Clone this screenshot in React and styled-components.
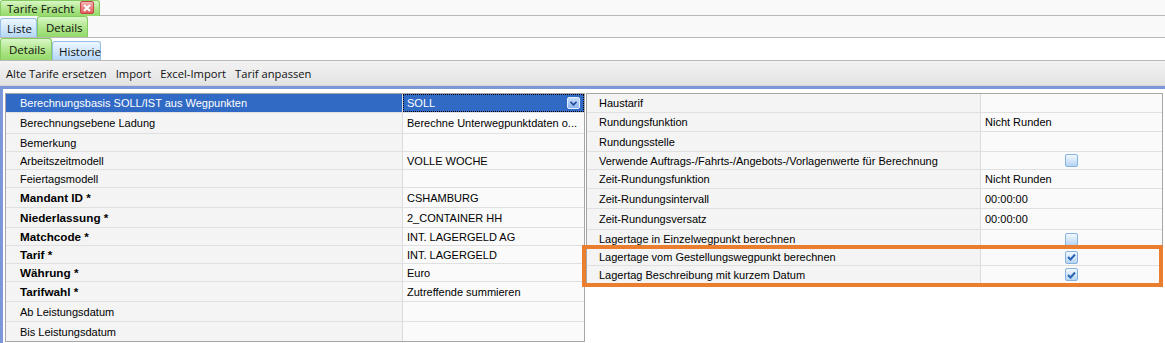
import styled, { createGlobalStyle, css } from 'styled-components';

const Global = createGlobalStyle`
  html, body { margin: 0; padding: 0; background: #fff; }
  body {
    font-family: "Liberation Sans", Arial, sans-serif;
    font-size: 11px;
    color: #000;
    width: 1165px;
    height: 343px;
    overflow: hidden;
  }
`;

const leftRows = [
  { label: 'Berechnungsbasis SOLL/IST aus Wegpunkten', value: 'SOLL', h: 19, selected: true },
  { label: 'Berechnungsebene Ladung', value: 'Berechne Unterwegpunktdaten o...', h: 21 },
  { label: 'Bemerkung', value: '', h: 18 },
  { label: 'Arbeitszeitmodell', value: 'VOLLE WOCHE', h: 18 },
  { label: 'Feiertagsmodell', value: '', h: 18 },
  { label: 'Mandant ID *', value: 'CSHAMBURG', h: 20, bold: true },
  { label: 'Niederlassung *', value: '2_CONTAINER HH', h: 20, bold: true },
  { label: 'Matchcode *', value: 'INT. LAGERGELD AG', h: 18, bold: true },
  { label: 'Tarif *', value: 'INT. LAGERGELD', h: 18, bold: true },
  { label: 'Währung *', value: 'Euro', h: 18, bold: true },
  { label: 'Tarifwahl *', value: 'Zutreffende summieren', h: 20, bold: true },
  { label: 'Ab Leistungsdatum', value: '', h: 20 },
  { label: 'Bis Leistungsdatum', value: '', h: 19 },
];

const rightRows = [
  { label: 'Haustarif', value: '', h: 19 },
  { label: 'Rundungsfunktion', value: 'Nicht Runden', h: 19 },
  { label: 'Rundungsstelle', value: '', h: 20 },
  { label: 'Verwende Auftrags-/Fahrts-/Angebots-/Vorlagenwerte für Berechnung', check: false, h: 18 },
  { label: 'Zeit-Rundungsfunktion', value: 'Nicht Runden', h: 19 },
  { label: 'Zeit-Rundungsintervall', value: '00:00:00', h: 20 },
  { label: 'Zeit-Rundungsversatz', value: '00:00:00', h: 21 },
  { label: 'Lagertage in Einzelwegpunkt berechnen', check: false, h: 19 },
  { label: 'Lagertage vom Gestellungswegpunkt berechnen', check: true, h: 17 },
  { label: 'Lagertag Beschreibung mit kurzem Datum', check: true, h: 18 },
];

const uiFont = css`
  font-family: "Open Sans", "Noto Sans", sans-serif;
  font-size: 11.5px;
`;

const TabStrip = styled.div`
  display: flex;
  align-items: flex-end;
  height: ${(p) => p.$h}px;
  box-sizing: border-box;
  background: ${(p) => (p.$white ? '#fff' : '#f9f9f9')};
  border-bottom: 1px solid #b9b9b9;
  ${uiFont};
`;

const green = css`
  background: linear-gradient(#d9f7c6, #aee58a 55%, #94d96a);
  border: 1px solid #86cb5f;
`;

const blue = css`
  background: linear-gradient(#eef7ff, #cfe6fb 55%, #b3d6f5);
  border: 1px solid #95bfe6;
`;

const Tab = styled.div`
  display: flex;
  align-items: center;
  box-sizing: border-box;
  width: ${(p) => p.$w}px;
  height: ${(p) => p.$h}px;
  padding-left: ${(p) => p.$pad ?? 6}px;
  border-bottom: none !important;
  border-radius: 3px 3px 0 0;
  color: #111;
  ${(p) => (p.$green ? green : blue)};
`;

const Close = styled.span`
  margin-left: auto;
  margin-right: 5px;
  width: 14px;
  height: 13px;
  box-sizing: border-box;
  border: 1px solid #c04848;
  border-radius: 2px;
  background: linear-gradient(#f6b4b4, #e25b5b);
  display: flex;
  align-items: center;
  justify-content: center;
  align-self: flex-start;
`;

const Toolbar = styled.div`
  display: flex;
  align-items: center;
  gap: 9px;
  height: 25px;
  padding-left: 6px;
  box-sizing: border-box;
  background: linear-gradient(#f3f3f3, #e3e3e3);
  border-bottom: 1px solid #d6d6d6;
  ${uiFont};
  font-size: 11.2px;
  color: #111;
`;

const Workspace = styled.div`
  position: relative;
  display: flex;
  align-items: flex-start;
  height: 257px;
  box-sizing: border-box;
  border-top: 3px solid #7c97da;
  border-left: 3px solid #7c97da;
  padding: 4px 0 0 2px;
`;

const Grid = styled.div`
  display: grid;
  grid-template-columns: ${(p) => p.$cols};
  border: 1px solid #a6a6a6;
  border-bottom: ${(p) => (p.$open ? 'none' : '1px solid #a6a6a6')};
  margin-left: ${(p) => p.$ml || 0}px;
`;

const Cell = styled.div`
  display: flex;
  align-items: center;
  box-sizing: border-box;
  height: ${(p) => p.$h}px;
  padding-left: ${(p) => p.$pl}px;
  border-bottom: ${(p) => (p.$last ? 'none' : '1px solid #e0e0e0')};
  white-space: nowrap;
  overflow: hidden;
  background: ${(p) => (p.$value ? '#fafafa' : '#f4f4f4')};
  ${(p) => !p.$value && 'border-right: 1px solid #dcdcdc;'}
  ${(p) => p.$bold && css`font-weight: bold; font-size: 11.7px;`}
  ${(p) => p.$center && 'justify-content: center; padding-left: 0;'}
  ${(p) =>
    p.$selected &&
    css`
      background: #316ac5;
      color: #fff;
    `}
`;

const FocusBox = styled.div`
  flex: 1;
  align-self: stretch;
  display: flex;
  align-items: center;
  margin-left: -4px;
  padding-left: 3px;
  border: 1px dotted #fff;
  outline: 1px dotted #000;
  outline-offset: -1px;
`;

const DropBtn = styled.span`
  margin-left: auto;
  margin-right: 3px;
  width: 13px;
  height: 12px;
  box-sizing: border-box;
  border: 1px solid #e6efff;
  border-radius: 2px;
  background: linear-gradient(#c6dcfc, #8fb4ef);
  display: flex;
  align-items: center;
  justify-content: center;
`;

const Check = styled.span`
  width: 13px;
  height: 13px;
  box-sizing: border-box;
  border: 1px solid #86b2e0;
  border-radius: 2px;
  background: linear-gradient(#f2f8ff, #cfe3f8 60%, #b6d4f2);
  display: flex;
  align-items: center;
  justify-content: center;
`;

const Marker = styled.div`
  position: absolute;
  left: 579px;
  top: 156px;
  width: 581px;
  height: 42px;
  box-sizing: border-box;
  border: 4px solid #ea7e2e;
  pointer-events: none;
`;

const CheckBox = ({ on }) => (
  <Check>
    {on && (
      <svg width="9" height="8" viewBox="0 0 9 8">
        <path d="M1 4 L3.5 6.5 L8 1.5" fill="none" stroke="#2b64b4" strokeWidth="2" />
      </svg>
    )}
  </Check>
);

const PropGrid = ({ rows, cols, labelPad, valuePad, ml, open }) => (
  <Grid $cols={cols} $ml={ml} $open={open}>
    {rows.map((r, i) => {
      const last = !open && i === rows.length - 1;
      return [
        <Cell key={`l${i}`} $h={r.h} $pl={labelPad} $bold={r.bold} $selected={r.selected} $last={last}>
          {r.label}
        </Cell>,
        <Cell
          key={`v${i}`}
          $value
          $h={r.h}
          $pl={valuePad}
          $selected={r.selected}
          $center={r.check !== undefined}
          $last={last}
        >
          {r.check !== undefined ? (
            <CheckBox on={r.check} />
          ) : r.selected ? (
            <FocusBox>
              {r.value}
              <DropBtn>
                <svg width="7" height="5" viewBox="0 0 7 5">
                  <path d="M0.5 0.8 L3.5 3.8 L6.5 0.8" fill="none" stroke="#21499a" strokeWidth="1.6" />
                </svg>
              </DropBtn>
            </FocusBox>
          ) : (
            r.value
          )}
        </Cell>,
      ];
    })}
  </Grid>
);

export default function App() {
  return (
    <>
      <Global />
      <TabStrip $h={16}>
        <Tab $green $w={100} $h={16} $pad={6} style={{ alignSelf: 'stretch' }}>
          Tarife Fracht
          <Close>
            <svg width="8" height="8" viewBox="0 0 8 8">
              <path d="M1 1 L7 7 M7 1 L1 7" stroke="#fff" strokeWidth="2" />
            </svg>
          </Close>
        </Tab>
      </TabStrip>
      <TabStrip $h={22}>
        <Tab $w={37} $h={19} $pad={6}>Liste</Tab>
        <Tab $green $w={51} $h={21} $pad={8}>Details</Tab>
      </TabStrip>
      <TabStrip $h={23} $white>
        <Tab $green $w={52} $h={22} $pad={8}>Details</Tab>
        <Tab $w={49} $h={19} $pad={6}>Historie</Tab>
      </TabStrip>
      <Toolbar>
        <span>Alte Tarife ersetzen</span>
        <span>Import</span>
        <span>Excel-Import</span>
        <span>Tarif anpassen</span>
      </Toolbar>
      <Workspace>
        <PropGrid rows={leftRows} cols="397px 181px" labelPad={14} valuePad={4} />
        <PropGrid rows={rightRows} cols="394px 181px" labelPad={12} valuePad={4} ml={1} open />
        <Marker />
      </Workspace>
    </>
  );
}
